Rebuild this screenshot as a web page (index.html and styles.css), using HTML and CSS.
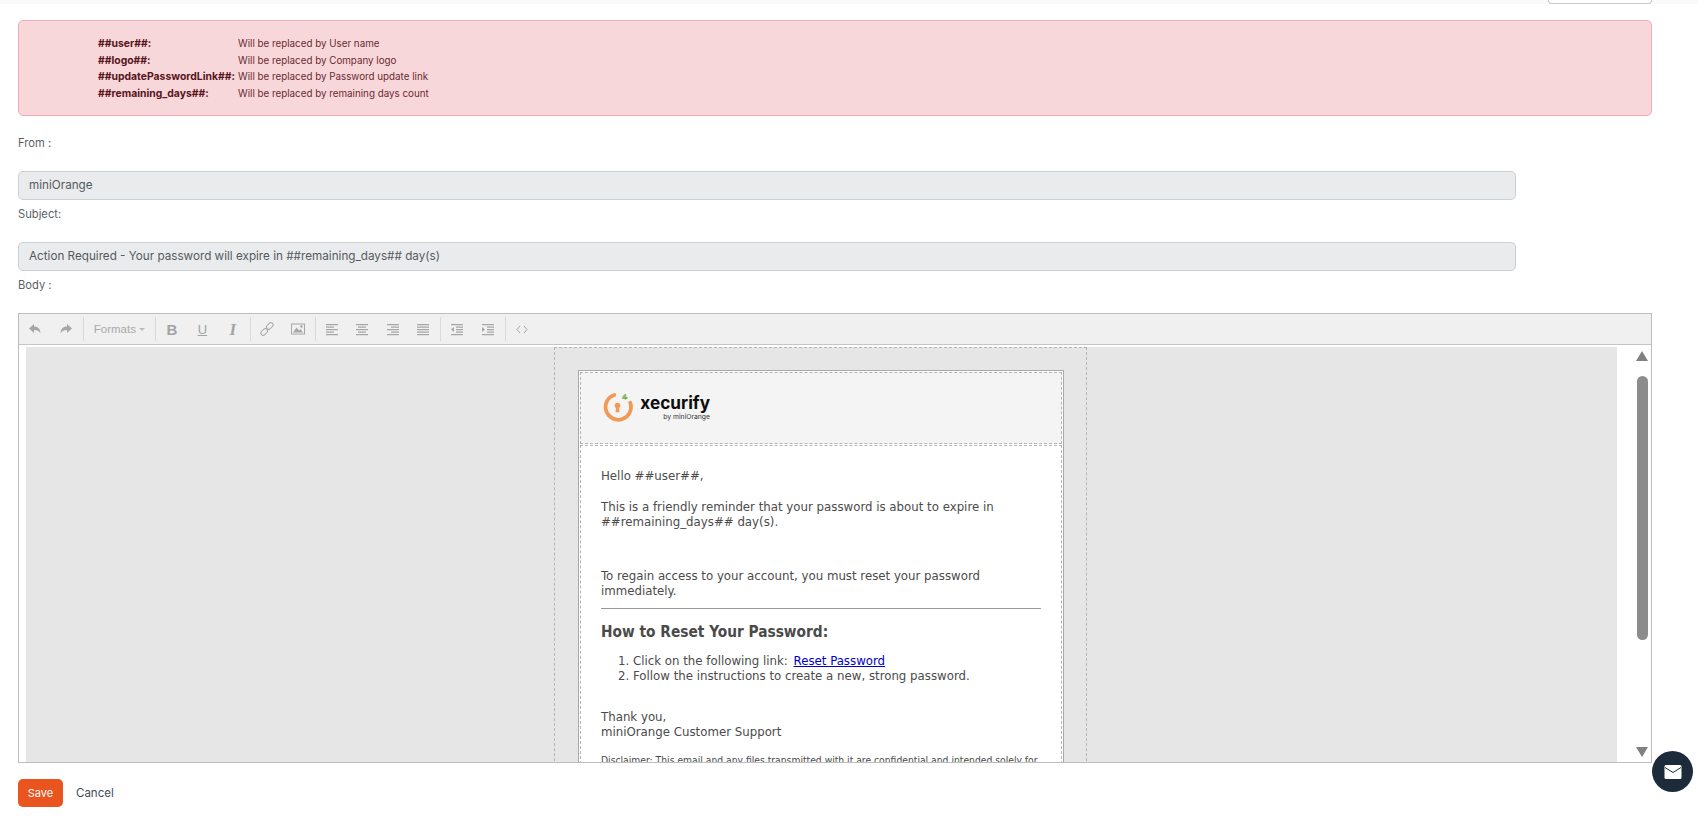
FILE: index.html
```html
<!DOCTYPE html>
<html lang="en">
<head>
<meta charset="utf-8">
<title>Email template</title>
<link rel="stylesheet" href="styles.css">
</head>
<body>
<div class="topstrip"><div class="topbtn"></div></div>
<main class="page">
  <section class="alert">
    <div class="vars">
      <b>##user##:</b><span>Will be replaced by User name</span>
      <b>##logo##:</b><span>Will be replaced by Company logo</span>
      <b>##updatePasswordLink##:</b><span>Will be replaced by Password update link</span>
      <b>##remaining_days##:</b><span>Will be replaced by remaining days count</span>
    </div>
  </section>
  <label class="lbl lbl-from">From :</label>
  <div class="field">miniOrange</div>
  <label class="lbl">Subject:</label>
  <div class="field">Action Required - Your password will expire in ##remaining_days## day(s)</div>
  <label class="lbl">Body :</label>
  <section class="editor">
    <div class="toolbar">
      <div class="group">
        <button class="tb"><svg viewBox="0 0 16 16"><path d="M7 3 2 7.500 7 12V9c3 0 5 .8 6.500 3.500C13.300 8 11 5.500 7 5.500z"/></svg></button>
        <button class="tb"><svg viewBox="0 0 16 16"><path d="M9 3l5 4.500L9 12V9c-3 0-5 .8-6.500 3.500C2.700 8 5 5.500 9 5.500z"/></svg></button>
      </div>
      <div class="group group-formats"><span class="formats">Formats</span><i class="caret"></i></div>
      <div class="group">
        <button class="tb tb-text tb-b">B</button>
        <button class="tb tb-text tb-u">U</button>
        <button class="tb tb-text tb-i">I</button>
      </div>
      <div class="group">
        <button class="tb"><svg viewBox="0 0 16 16" class="line"><rect x="8.500" y="1.200" width="4.500" height="7.500" rx="2.200" transform="rotate(45 10.700 5)"/><rect x="3" y="7.300" width="4.500" height="7.500" rx="2.200" transform="rotate(45 5.300 11)"/></svg></button>
        <button class="tb"><svg viewBox="0 0 16 16"><path fill-rule="evenodd" d="M1 2.500h14v11H1zM2 3.500v9h12v-9z"/><path d="M3 11.500l3.500-5 2.500 3 1.500-1.500 2.500 3.500z"/><circle cx="11.500" cy="5.500" r="1.200"/></svg></button>
      </div>
      <div class="group">
        <button class="tb"><svg viewBox="0 0 16 16"><path d="M2 3h12v1.200H2zM2 5.500h8v1.200H2zM2 8h12v1.200H2zM2 10.500h8v1.200H2zM2 13h12v1.200H2z"/></svg></button>
        <button class="tb"><svg viewBox="0 0 16 16"><path d="M2 3h12v1.200H2zM4 5.500h8v1.200H4zM2 8h12v1.200H2zM4 10.500h8v1.200H4zM2 13h12v1.200H2z"/></svg></button>
        <button class="tb"><svg viewBox="0 0 16 16"><path d="M2 3h12v1.200H2zM6 5.500h8v1.200H6zM2 8h12v1.200H2zM6 10.500h8v1.200H6zM2 13h12v1.200H2z"/></svg></button>
        <button class="tb"><svg viewBox="0 0 16 16"><path d="M2 3h12v1.200H2zM2 5.500h12v1.200H2zM2 8h12v1.200H2zM2 10.500h12v1.200H2zM2 13h12v1.200H2z"/></svg></button>
      </div>
      <div class="group">
        <button class="tb"><svg viewBox="0 0 16 16"><path d="M2 3h12v1.200H2zM7 5.500h7v1.200H7zM7 8h7v1.200H7zM7 10.500h7v1.200H7zM2 13h12v1.200H2zM5 6v5L2 8.500z"/></svg></button>
        <button class="tb"><svg viewBox="0 0 16 16"><path d="M2 3h12v1.200H2zM7 5.500h7v1.200H7zM7 8h7v1.200H7zM7 10.500h7v1.200H7zM2 13h12v1.200H2zM2 6v5l3-2.500z"/></svg></button>
      </div>
      <div class="group group-last">
        <button class="tb"><svg viewBox="0 0 16 16" class="line"><path d="M6 5 3 8.500 6 12M10 5l3 3.500-3 3.500"/></svg></button>
      </div>
    </div>
    <div class="edit-area">
      <div class="canvas">
        <div class="outer-dash">
          <div class="mail">
            <div class="mail-head">
              <div class="logo">
                <svg class="logo-mark" viewBox="0 0 34 34">
                  <path class="arc" d="M13 4.800A13.500 13.500 0 1 0 30 13"/>
                  <circle class="hole" cx="16.500" cy="16" r="3"/>
                  <path class="hole" d="M15 17h3l.6 6h-4.200z"/>
                  <path class="leaf" d="M20 9c0-3 2-6 6-8 1.500 4 .5 7-2 8.500z"/>
                  <path class="leaf2" d="M24 8c1.500-1 3.500-1.200 5-1-.5 2-2.500 3.500-5 3z"/>
                </svg>
                <div class="logo-text"><span class="logo-name">xecurify</span><span class="logo-by">by miniOrange</span></div>
              </div>
            </div>
            <div class="mail-body">
              <p class="p-hello">Hello ##user##,</p>
              <p class="p-remind">This is a friendly reminder that your password is about to expire in ##remaining_days## day(s).</p>
              <p class="p-regain">To regain access to your account, you must reset your password immediately.</p>
              <hr class="rule">
              <h3 class="howto">How to Reset Your Password:</h3>
              <ol class="steps">
                <li>Click on the following link: <a href="#">Reset Password</a></li>
                <li>Follow the instructions to create a new, strong password.</li>
              </ol>
              <p class="p-thanks">Thank you,<br>miniOrange Customer Support</p>
              <p class="p-disc">Disclaimer: This email and any files transmitted with it are confidential and intended solely for the use of the individual or entity to whom they are addressed.</p>
            </div>
          </div>
        </div>
      </div>
      <div class="scrollbar">
        <i class="arrow-up"></i>
        <div class="thumb"></div>
        <i class="arrow-down"></i>
      </div>
    </div>
  </section>
  <div class="actions">
    <button class="save">Save</button>
    <button class="cancel">Cancel</button>
  </div>
</main>
<button class="chat" aria-label="Messages"><svg viewBox="0 0 18 16"><path class="env" d="M2 1h14a1.500 1.500 0 0 1 1.500 1.500v11A1.500 1.500 0 0 1 16 15H2A1.500 1.500 0 0 1 .5 13.500v-11A1.500 1.500 0 0 1 2 1z"/><path class="flap" d="M1 3.500 9 8.500l8-5"/></svg></button>
</body>
</html>
```
FILE: styles.css
```css
* { box-sizing: border-box; }
html, body { margin: 0; height: 816px; overflow: hidden; background: #fff; }
body { font-family: "Inter", "Lato", sans-serif; color: #4a4f57; font-size: 12px; }

.topstrip { height: 4px; background: #fafafa; display: flex; justify-content: flex-end; padding-right: 46px; }
.topbtn { width: 104px; height: 4px; background: #fff; border: 1px solid #c9c9c9; border-top: 0; border-radius: 0 0 5px 5px; }

.page { padding: 16px 46px 0 18px; }

.alert { height: 96px; background: #f8d7da; border: 1px solid #f1aeb5; border-radius: 5px; padding: 14px 0 0 79px; color: #6a2a30; }
.vars { display: grid; grid-template-columns: 140px 1fr; grid-auto-rows: 16.800px; align-items: center; font-size: 9.800px; }
.vars b { font-weight: 700; font-size: 10.400px; color: #58151c; white-space: nowrap; }

.lbl { display: block; font-size: 11.200px; line-height: 16px; color: #5b5f66; }
.lbl-from { margin-top: 19px; }
.field { width: 1498px; height: 29px; margin-top: 20px; margin-bottom: 6px; padding: 0 10px; line-height: 27px; background: #e9ebed; border: 1px solid #cdd0d3; border-radius: 5px; font-size: 11.700px; color: #555a60; }

.editor { height: 450px; margin-top: 20px; border: 1px solid #bdbdbd; display: flex; flex-direction: column; overflow: hidden; }

.toolbar { height: 31px; flex: none; display: flex; align-items: center; background: #f0f0f0; border-bottom: 1px solid #c5c5c5; padding-left: 1px; }
.group { height: 24px; display: flex; align-items: center; border-right: 1px solid #d9d9d9; padding-right: 2px; margin-right: 1px; }
.group-last { border-right: 0; }
.group-formats { width: 71px; padding-left: 9px; }
.formats { font-family: "Liberation Sans", sans-serif; font-size: 11.500px; color: #aaa; }
.caret { margin-left: 3px; margin-top: 1px; border: 3px solid transparent; border-top-color: #bbb; border-bottom: 0; }
.tb { width: 30.400px; height: 24px; padding: 0; border: 0; background: none; display: flex; align-items: center; justify-content: center; color: #a3a3a3; font-family: "Liberation Sans", sans-serif; }
.tb svg { width: 16px; height: 16px; fill: #a6a6a6; }
.tb svg.line { fill: none; stroke: #a6a6a6; stroke-width: 1; }
.tb-text { font-size: 15px; line-height: 1; }
.tb-b { font-weight: 700; }
.tb-u { text-decoration: underline; font-size: 13px; }
.tb-i { font-style: italic; font-family: "Liberation Serif", serif; font-size: 17px; font-weight: 700; }

.edit-area { flex: 1; min-height: 0; display: flex; background: #fff; padding: 2px 0 0 7px; }
.canvas { width: 1591px; flex: none; background: #e6e6e6; display: flex; justify-content: center; overflow: hidden; }
.outer-dash { width: 533px; height: 700px; flex: none; margin-left: -2px; border: 1px dashed #b5b5b5; padding: 22px 22px 0 23px; }
.mail { border: 1px solid #a8a8a8; background: #fff; height: 660px; padding: 1px; }
.mail-head { height: 72px; background: #f5f4f4; border: 1px dashed #b5b5b5; padding: 17px 0 0 21px; }
.logo { display: flex; align-items: flex-start; gap: 2px; }
.logo-mark { width: 32px; height: 33px; }
.arc { fill: none; stroke: #f09a55; stroke-width: 4; stroke-linecap: round; }
.hole { fill: #f09a55; }
.leaf { fill: #8dbf6a; transform: scale(.7); transform-origin: 24px 8px; }
.leaf2 { fill: #5c9e4a; transform: scale(.7); transform-origin: 24px 8px; }
.logo-text { display: flex; flex-direction: column; align-items: flex-end; width: 74px; margin-top: 3px; }
.logo-name { font-family: "Inter", sans-serif; font-size: 17.200px; line-height: 20px; font-weight: 700; color: #0d0d0d; }
.logo-by { font-family: "Inter", sans-serif; font-size: 6.800px; line-height: 8px; color: #333; }

.mail-body { margin-top: 1px; height: 600px; border: 1px dashed #b5b5b5; padding: 22px 20px 0 20px; font-family: "DejaVu Sans Condensed", "DejaVu Sans", sans-serif; font-size: 13.100px; line-height: 15.500px; color: #4b4b4b; }
.mail-body p { margin: 0; }
.mail-body .p-remind { margin-top: 15px; }
.mail-body .p-regain { margin-top: 38px; }
.rule { margin: 9px 0 0; height: 1px; border: 0; background: #999; }
.howto { margin: 14px 0 0; font-size: 15.300px; line-height: 18px; font-weight: 700; color: #4a4a4a; }
.steps { margin: 12px 0 0; padding-left: 32px; }
.steps a { color: #0000cc; margin-left: 2px; }
.mail-body .p-thanks { margin-top: 25px; }
.mail-body .p-disc { margin-top: 13px; font-size: 10.250px; line-height: 14px; }

.scrollbar { flex: 1; position: relative; display: flex; flex-direction: column; align-items: center; padding: 4px 0 0 16px; background: #fff; }
.arrow-up { border: 6.500px solid transparent; border-top: 0; border-bottom: 10px solid #808080; }
.thumb { width: 11px; height: 264px; margin-top: 15px; background: #8c8c8c; border-radius: 6px; }
.arrow-down { position: absolute; top: 400px; border: 6.500px solid transparent; border-bottom: 0; border-top: 10px solid #808080; }

.actions { display: flex; align-items: center; margin-top: 16px; }
.save { width: 45px; height: 28px; padding: 0; border: 0; border-radius: 5px; background: #e9541f; color: #fff; font: 11px "Inter", sans-serif; }
.cancel { margin-left: 13px; padding: 0; border: 0; background: none; color: #3f4a5a; font: 11.500px "Inter", sans-serif; }

.chat { position: fixed; left: 1652px; top: 751px; width: 41px; height: 41px; padding: 0; border: 0; border-radius: 50%; background: #1b2b3a; display: flex; align-items: center; justify-content: center; }
.chat svg { width: 18px; height: 16px; }
.env { fill: #fff; }
.flap { fill: none; stroke: #1b2b3a; stroke-width: 1; }
```
